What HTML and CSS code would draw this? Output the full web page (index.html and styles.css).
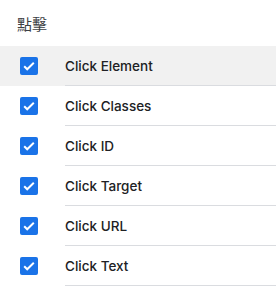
FILE: index.html
```html
<!DOCTYPE html>
<html>
<head>
<meta charset="utf-8">
<link rel="stylesheet" href="styles.css">
</head>
<body>
<div class="panel">
  <div class="heading">點擊</div>
  <ul class="list">
    <li class="row active"><span class="cell"><span class="box"><svg viewBox="0 0 18 18" width="18" height="18"><path d="M4.2 9.3l3 3 6.6-6.6" fill="none" stroke="#fff" stroke-width="2"/></svg></span></span><span class="label">Click Element</span></li>
    <li class="row"><span class="cell"><span class="box"><svg viewBox="0 0 18 18" width="18" height="18"><path d="M4.2 9.3l3 3 6.6-6.6" fill="none" stroke="#fff" stroke-width="2"/></svg></span></span><span class="label">Click Classes</span></li>
    <li class="row"><span class="cell"><span class="box"><svg viewBox="0 0 18 18" width="18" height="18"><path d="M4.2 9.3l3 3 6.6-6.6" fill="none" stroke="#fff" stroke-width="2"/></svg></span></span><span class="label">Click ID</span></li>
    <li class="row"><span class="cell"><span class="box"><svg viewBox="0 0 18 18" width="18" height="18"><path d="M4.2 9.3l3 3 6.6-6.6" fill="none" stroke="#fff" stroke-width="2"/></svg></span></span><span class="label">Click Target</span></li>
    <li class="row"><span class="cell"><span class="box"><svg viewBox="0 0 18 18" width="18" height="18"><path d="M4.2 9.3l3 3 6.6-6.6" fill="none" stroke="#fff" stroke-width="2"/></svg></span></span><span class="label">Click URL</span></li>
    <li class="row"><span class="cell"><span class="box"><svg viewBox="0 0 18 18" width="18" height="18"><path d="M4.2 9.3l3 3 6.6-6.6" fill="none" stroke="#fff" stroke-width="2"/></svg></span></span><span class="label">Click Text</span></li>
  </ul>
</div>
</body>
</html>
```
FILE: styles.css
```css
html, body {
  margin: 0;
  padding: 0;
  background: #fff;
}
.panel {
  font-family: Inter, "Noto Sans CJK TC", sans-serif;
  color: #202124;
}
.heading {
  height: 46px;
  box-sizing: border-box;
  padding: 13px 0 0 17px;
  font-family: "Noto Sans CJK TC", sans-serif;
  font-size: 15px;
  line-height: 22px;
  color: #3c4043;
}
.list {
  list-style: none;
  margin: 0;
  padding: 0;
}
.row {
  display: flex;
  height: 40px;
}
.row.active {
  background: #f1f1f1;
}
.cell {
  width: 65px;
  flex: none;
  display: flex;
  align-items: center;
  padding-left: 20px;
  box-sizing: border-box;
}
.box {
  width: 18px;
  height: 18px;
  border-radius: 2px;
  background: #1a73e8;
  display: block;
}
.box svg {
  display: block;
}
.label {
  flex: 1;
  display: flex;
  align-items: center;
  border-bottom: 1px solid #dadce0;
  font-size: 13.5px;
  font-weight: 500;
}
```
